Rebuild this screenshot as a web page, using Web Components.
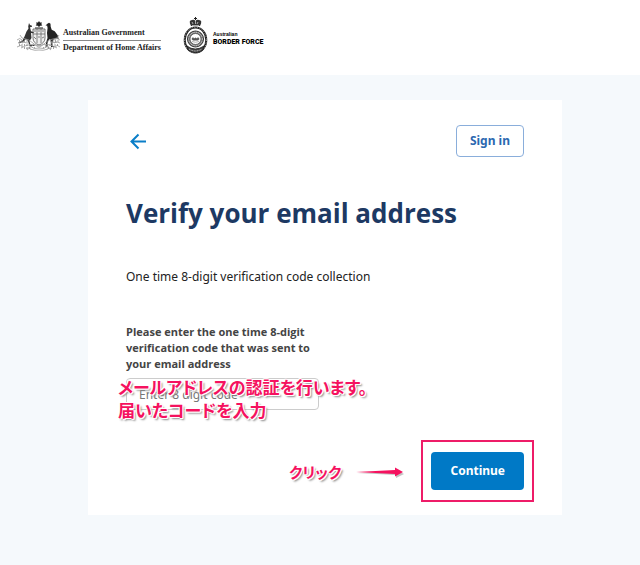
<!DOCTYPE html>
<html lang="en">
<head>
<meta charset="utf-8">
<meta name="viewport" content="width=device-width, initial-scale=1">
<title>Verify your email address</title>
<style>
    body {
        margin: 0;
        min-height: 100vh;
        background: #f5f9fc;
        color: #222;
        font-family: "Noto Sans", "Noto Sans CJK JP", sans-serif;
    }
</style>
</head>
<body>
<verify-page></verify-page>

<script>
class GovLogo extends HTMLElement {
    constructor() {
        super();
        this.attachShadow({ mode: 'open' });
    }

    connectedCallback() {
        this.shadowRoot.innerHTML = `
        <style>
            :host {
                display: flex;
                align-items: center;
                gap: 1px;
                font: bold 8px/14px "Liberation Serif", serif;
                color: #222;
            }
            svg { display: block; }
            div { padding-top: 10px; }
            span { display: block; white-space: nowrap; }
            .dept { border-top: 1px solid #888; }
        </style>
        <svg width="46" height="32" viewBox="0 0 46 32" fill="none" stroke="#777" stroke-width=".8">
            <!-- shield -->
            <path d="M17 9h12v9q0 5-6 7q-6-2-6-7z" fill="#eee" stroke="#555"/>
            <path d="M17 14h12M21 9v14M25 9v14M18 11h2M26 11h2M22 11h2M18 17l2 2M22 17h2M26 18l2-1" stroke="#666"/>
            <!-- star and wreath -->
            <path d="M23 1l1 1.600 2-.2-.7 1.700 1 1.500-2 .1L23 7l-1.300-1.300-2-.1 1-1.500-.7-1.700 2 .2z" fill="#222" stroke="none"/>
            <path d="M19 8h8" stroke="#444" stroke-width="1.200"/>
            <!-- kangaroo -->
            <path d="M13 3l1 2 2 .7v1l-2 .6 1 4 3 1-1 1-2-.3.5 5-2 3 1 4h4v1h-5l-1.500-5-2-2-3 3-4 1.500-.5-1 4-2 2-4 2-5 2-3-.3-2z" fill="#333" stroke="none"/>
            <!-- emu -->
            <path d="M31 4l2-1.300 1.500 1 .2 3 1 3 3 1.500 3 4 1 4-2-1-3 1-1 2-.7 5h2v.8h-3l.4-6-2-2-2 4 .5 4h-2l-.6-.8 1-.2-.4-3 1.600-5-.5-5 .6-5-.5-2.500-1.600.2z" fill="#222" stroke="none"/>
            <!-- wattle sprays -->
            <g stroke="#999">
                <path d="M23 26q-8-4-18 2M23 26q8-4 18 2M22 27l-9-7-7-2M24 27l9-7 8-2M12 23l-7-1M34 23l7-1M6 18l-2-3M41 18l2-3M17 25l-6 5M29 25l6 5M23 25v5"/>
                <path d="M1 20q3-3 5 0M2 23q3-2 5 0M1 27q4-3 6 0M38 20q3-3 6 0M38 23q3-2 6 0M38 27q4-3 6 0M10 29q3-3 5 0M30 29q3-3 5 0"/>
            </g>
            <g stroke="#888" stroke-width="1.400" stroke-dasharray="1 1.500">
                <path d="M3 21h9M34 21h9M3 25h12M31 25h12M8 28h11M27 28h11"/>
            </g>
            <path d="M14 26q4 4 9 2q5 2 9-2v3q-5 2-9 1q-4 1-9-1z" fill="#fff" stroke="#999"/>
        </svg>
        <div>
            <span>Australian Government</span>
            <span class="dept">Department of Home Affairs</span>
        </div>
    `;
    }
}

class BorderForceLogo extends HTMLElement {
    constructor() {
        super();
        this.attachShadow({ mode: 'open' });
    }

    connectedCallback() {
        this.shadowRoot.innerHTML = `
        <style>
            :host {
                display: flex;
                align-items: center;
                gap: 5px;
                color: #000;
            }
            svg { display: block; }
            div { padding-top: 6px; }
            span { display: block; white-space: nowrap; }
            .small { font: bold 5px/7px "Liberation Sans", sans-serif; }
            .large { font: 900 7px/8px Roboto, "Liberation Sans", sans-serif; }
        </style>
        <svg width="25" height="38" viewBox="0 0 25 38" fill="none" stroke="#222">
            <!-- crown -->
            <path d="M8 9Q5 3 9 3q2-1 3.500 1Q14 2 16 3q4 0 1 6z" fill="#333" stroke="none"/>
            <path d="M12.500 0v3M11 1.500h3" stroke-width="1"/>
            <path d="M9 5l1 2M15 5l-1 2M12.500 4v3M9 8.500h7" stroke="#ddd" stroke-width=".7"/>
            <!-- outer wreath -->
            <ellipse cx="12.500" cy="23" rx="10.800" ry="12.500" stroke-width="2"/>
            <ellipse cx="12.500" cy="23" rx="11" ry="12.800" stroke="#bbb" stroke-width="1" stroke-dasharray="1 1.600"/>
            <!-- lettered ring -->
            <circle cx="12.500" cy="22" r="8" fill="#777" stroke="#333" stroke-width="1"/>
            <circle cx="12.500" cy="22" r="6.800" stroke="#ddd" stroke-width="1" stroke-dasharray="1 .8"/>
            <circle cx="12.500" cy="22" r="5.500" fill="#fff" stroke="#444" stroke-width=".7"/>
            <path d="M8.500 22l1.500-2 1 1.500 1.500-1 1.500 1 1-1.500 1.500 2-1.500 1.500h-5z" fill="#555" stroke="none"/>
            <path d="M9 24.500q3.500 1.500 7 0" stroke="#999" stroke-width=".8"/>
            <!-- scroll -->
            <path d="M4 29q8 6 17 0l-1 4q-7 5-15 0z" fill="#444" stroke="#222" stroke-width=".8"/>
            <path d="M6 32q6 4 13 0" stroke="#ddd" stroke-width=".9" stroke-dasharray="1 .7"/>
        </svg>
        <div>
            <span class="small">Australian</span>
            <span class="large">BORDER FORCE</span>
        </div>
    `;
    }
}

class SiteHeader extends HTMLElement {
    constructor() {
        super();
        this.attachShadow({ mode: 'open' });
    }

    connectedCallback() {
        this.shadowRoot.innerHTML = `
        <style>
            :host {
                display: flex;
                align-items: center;
                gap: 22px;
                box-sizing: border-box;
                height: 75px;
                padding: 0 16px 4px;
                background: #fff;
            }
        </style>
        <slot></slot>
    `;
    }
}

class CodeField extends HTMLElement {
    constructor() {
        super();
        this.attachShadow({ mode: 'open' });
    }

    connectedCallback() {
        this.shadowRoot.innerHTML = `
        <style>
            :host {
                display: block;
                position: relative;
                width: 50%;
                min-width: 193px;
            }
            label {
                display: block;
                max-width: 190px;
                font: bold 11px/16px "Open Sans", sans-serif;
                color: #444;
            }
            input {
                display: block;
                box-sizing: border-box;
                width: 193px;
                height: 32px;
                margin-top: 6px;
                padding: 0 12px;
                border: 1px solid #ccc;
                border-radius: 4px;
                background: #fff;
                font: 12px "Noto Sans", sans-serif;
                color: #333;
            }
            input::placeholder { color: #777; opacity: 1; }
            ::slotted(*) {
                position: absolute;
                left: -8px;
                bottom: -11px;
            }
        </style>
        <label for="code">${this.getAttribute('label')}</label>
        <input id="code" type="text" inputmode="numeric" placeholder="${this.getAttribute('placeholder')}">
        <slot></slot>
    `;
    }
}

/* Pink outlined text used for the walkthrough notes */
class GuideNote extends HTMLElement {
    constructor() {
        super();
        this.attachShadow({ mode: 'open' });
    }

    connectedCallback() {
        this.shadowRoot.innerHTML = `
        <style>
            :host {
                display: block;
                white-space: nowrap;
                font: bold 17px/23px "Noto Sans CJK JP", sans-serif;
                font-feature-settings: "palt";
                color: #f5125f;
                text-shadow: 1px 0 #fff, -1px 0 #fff, 0 1px #fff, 0 -1px #fff, 1px 1px #fff, -1px -1px #fff, 2px 2px 2px #888;
            }
            :host([small]) { font-size: 15px; }
        </style>
        <slot></slot>
    `;
    }
}

class VerifyCard extends HTMLElement {
    constructor() {
        super();
        this.attachShadow({ mode: 'open' });
    }

    connectedCallback() {
        this.shadowRoot.innerHTML = `
        <style>
            :host {
                display: block;
                padding: 25px 38px;
                background: #fff;
            }
            .top, .actions {
                display: flex;
                align-items: center;
            }
            .top { justify-content: space-between; }
            .actions {
                justify-content: flex-end;
                gap: 14px;
                margin-top: 42px;
            }
            button {
                box-sizing: border-box;
                margin: 0;
                border-radius: 4px;
                font: bold 12px/16px "Noto Sans", sans-serif;
                cursor: pointer;
            }
            .back {
                padding: 0;
                border: 0;
                background: none;
            }
            svg { display: block; }
            .signin {
                height: 32px;
                padding: 0 13px;
                border: 1px solid #8aaedb;
                background: #fff;
                color: #2b68b0;
            }
            .continue {
                height: 38px;
                padding: 0 19px;
                border: 0;
                background: #0079c6;
                color: #fff;
            }
            h1 {
                margin: 38px 0 0;
                font: bold 26px/36px "Open Sans", sans-serif;
                color: #1d3963;
            }
            p {
                margin: 36px 0 0;
                font-size: 12px;
                line-height: 20px;
            }
            code-field { margin-top: 37px; }
            .target {
                position: relative;
                margin-left: 12px;
            }
            .target::after {
                content: '';
                position: absolute;
                inset: -12px -10px;
                border: 2px solid #ee1c68;
                pointer-events: none;
            }
        </style>
        <div class="top">
            <button class="back" aria-label="Back">
                <svg width="24" height="24" viewBox="0 0 24 24" fill="none" stroke="#0a7ec8" stroke-width="2">
                    <path d="M20 12.500H5.500M12.500 5.500l-7 7 7 7"/>
                </svg>
            </button>
            <button class="signin">Sign in</button>
        </div>
        <h1>Verify your email address</h1>
        <p>One time 8-digit verification code collection</p>
        <code-field label="Please enter the one time 8-digit verification code that was sent to your email address" placeholder="Enter 8 digit code">
            <guide-note>メールアドレスの認証を行います。<br>届いたコードを入力</guide-note>
        </code-field>
        <div class="actions">
            <guide-note small>クリック</guide-note>
            <svg width="50" height="14" viewBox="0 0 50 14">
                <path d="M2 9l39-1V6l8 4-8 4v-3z" fill="#999" opacity=".6"/>
                <path d="M1 8l39-2V3.500l8 4.500-8 4.500V10z" fill="#f5125f"/>
            </svg>
            <div class="target"><button class="continue">Continue</button></div>
        </div>
    `;
    }
}

class VerifyPage extends HTMLElement {
    constructor() {
        super();
        this.attachShadow({ mode: 'open' });
    }

    connectedCallback() {
        this.shadowRoot.innerHTML = `
        <style>
            :host { display: block; }
            main { padding: 25px 78px 50px 88px; }
        </style>
        <site-header>
            <gov-logo></gov-logo>
            <border-force-logo></border-force-logo>
        </site-header>
        <main>
            <verify-card></verify-card>
        </main>
    `;
    }
}

customElements.define('gov-logo', GovLogo);
customElements.define('border-force-logo', BorderForceLogo);
customElements.define('site-header', SiteHeader);
customElements.define('guide-note', GuideNote);
customElements.define('code-field', CodeField);
customElements.define('verify-card', VerifyCard);
customElements.define('verify-page', VerifyPage);
</script>
</body>
</html>
